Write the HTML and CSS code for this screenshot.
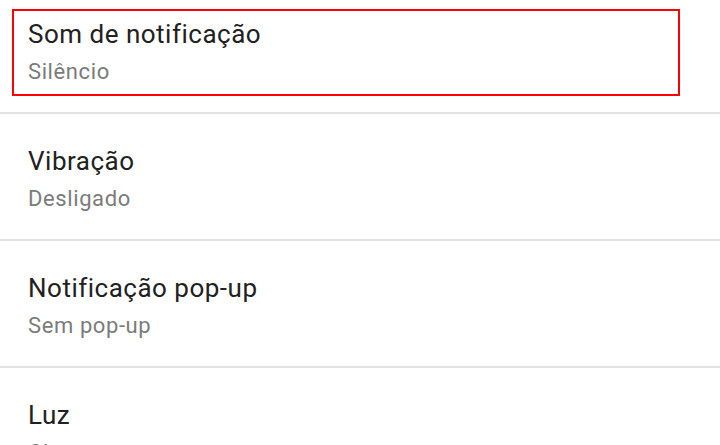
FILE: index.html
```html
<!DOCTYPE html>
<html lang="pt">
<head>
<meta charset="utf-8">
<link rel="stylesheet" href="styles.css">
</head>
<body>
<div class="list">
  <div class="item">
    <div class="title">Som de notificação</div>
    <div class="subtitle">Silêncio</div>
  </div>
  <div class="item">
    <div class="title">Vibração</div>
    <div class="subtitle">Desligado</div>
  </div>
  <div class="item">
    <div class="title">Notificação pop-up</div>
    <div class="subtitle">Sem pop-up</div>
  </div>
  <div class="item">
    <div class="title">Luz</div>
    <div class="subtitle">Ciano</div>
  </div>
</div>
<div class="highlight"></div>
</body>
</html>
```

FILE: styles.css
```css
html, body {
  margin: 0;
  padding: 0;
  background: #ffffff;
  overflow: hidden;
  width: 720px;
  height: 445px;
}
body {
  position: relative;
  font-family: Roboto, "Noto Sans", sans-serif;
}
.list {
  display: flex;
  flex-direction: column;
  margin-top: -13px;
}
.item {
  height: 127px;
  box-sizing: border-box;
  padding: 31px 28px 0;
  border-bottom: 2px solid #e2e2e2;
}
.title {
  font-size: 26px;
  line-height: 32px;
  letter-spacing: 0.5px;
  color: #212121;
}
.subtitle {
  font-size: 22px;
  line-height: 30px;
  letter-spacing: 0.6px;
  margin-top: 7px;
  color: #7b7b7b;
}
.highlight {
  position: absolute;
  left: 12px;
  top: 9px;
  width: 664px;
  height: 83px;
  border: 2px solid #ff0000;
}
```
